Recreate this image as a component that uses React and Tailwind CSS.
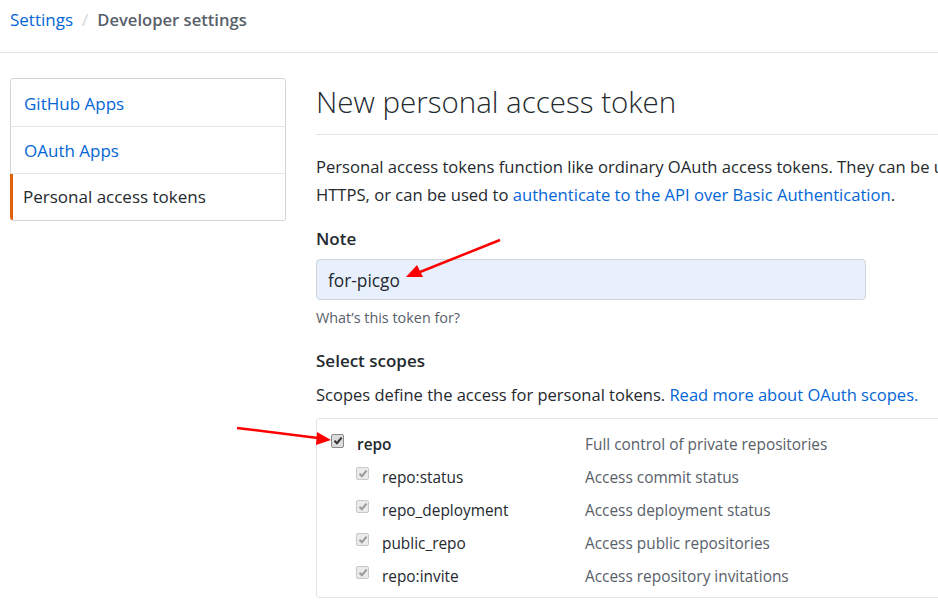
import React from "react";

function Check({ strong }) {
  return (
    <div
      className={
        strong
          ? "w-[13px] h-[14px] mb-[7px] rounded-[2px] border border-[#8a8a8a] bg-[#dcdcdc] flex items-center justify-center"
          : "w-[13px] h-[13px] mb-[7px] rounded-[2px] border border-[#c8c8c8] bg-[#ebebeb] flex items-center justify-center"
      }
    >
      <svg width="10" height="9" viewBox="0 0 10 9">
        <path
          d="M1.5 4.8 L3.9 7.2 L8.6 1.6"
          fill="none"
          stroke={strong ? "#333" : "#9a9a9a"}
          strokeWidth="2"
        />
      </svg>
    </div>
  );
}

const subs = [
  ["repo:status", "Access commit status"],
  ["repo_deployment", "Access deployment status"],
  ["public_repo", "Access public repositories"],
  ["repo:invite", "Access repository invitations"],
];

export default function App() {
  return (
    <div
      className="relative w-[938px] h-[600px] overflow-hidden bg-white text-[#24292e]"
      style={{ fontFamily: '"Open Sans", "Noto Sans", sans-serif' }}
    >
      <div className="h-[53px] border-b border-[#e1e4e8] px-[10px] pt-[6px] flex items-baseline text-[17px] leading-[28px]">
        <span className="text-[#0366d6]">Settings</span>
        <span className="mx-[9px] text-[#d1d5da]">/</span>
        <span className="font-semibold text-[#586069] text-[16.6px]">Developer settings</span>
      </div>

      <div className="flex pt-[25px] pl-[10px]">
        <div className="w-[276px] h-[143px] shrink-0 border border-[#d1d5da] rounded-[3px] flex flex-col text-[17px]">
          <div className="h-[48px] flex items-center pl-[13px] pt-[2px] border-b border-[#e1e4e8] text-[#0366d6]">
            GitHub Apps
          </div>
          <div className="h-[47px] flex items-center pl-[13px] pt-[2px] border-b border-[#e1e4e8] text-[#0366d6]">
            OAuth Apps
          </div>
          <div className="flex-1 flex items-center pl-[10px] border-l-[3px] border-[#e36209] -ml-px rounded-bl-[3px] text-[#24292e]">
            Personal access tokens
          </div>
        </div>

        <div className="ml-[30px] w-[900px] shrink-0">
          <div className="h-[57px] border-b border-[#e1e4e8]">
            <h1 className="text-[29.5px] font-light leading-[48px]">New personal access token</h1>
          </div>
          <p className="mt-[18px] text-[16.6px] leading-[28px] whitespace-nowrap">
            Personal access tokens function like ordinary OAuth access tokens. They can be used instead of a password for Git over
            <br />
            HTTPS, or can be used to{" "}
            <span className="text-[#0366d6]">authenticate to the API over Basic Authentication</span>.
          </p>

          <div className="mt-[16px] text-[17px] font-semibold leading-[28px]">Note</div>
          <div className="mt-[6px] w-[550px] h-[41px] rounded-[4px] border border-[#d1d5da] bg-[#e8f0fe] flex items-center pl-[11px] pt-[3px] text-[17.3px]">
            for-picgo
          </div>
          <div className="mt-[6px] text-[14.4px] leading-[24px] text-[#586069]">What’s this token for?</div>

          <div className="mt-[17px] text-[17px] font-semibold leading-[28px]">Select scopes</div>
          <p className="mt-[6px] text-[16.5px] leading-[28px]">
            Scopes define the access for personal tokens.{" "}
            <span className="text-[#0366d6]">Read more about OAuth scopes.</span>
          </p>

          <div className="mt-[9px] border border-[#e1e4e8] rounded-tl-[3px] rounded-bl-[3px] pt-[9px] pb-[4px] text-[15.4px]">
            <div className="h-[33px] flex items-center">
              <div className="w-[268px] flex items-center pl-[14px]">
                <Check strong />
                <span className="ml-[13px] font-semibold">repo</span>
              </div>
              <span className="text-[#586069]">Full control of private repositories</span>
            </div>
            {subs.map(([n, d]) => (
              <div key={n} className="h-[33px] flex items-center">
                <div className="w-[268px] flex items-center pl-[39px]">
                  <Check />
                  <span className="ml-[13px]">{n}</span>
                </div>
                <span className="text-[#586069]">{d}</span>
              </div>
            ))}
          </div>
        </div>
      </div>

      <svg className="absolute inset-0 pointer-events-none" width="938" height="600">
        <line x1="500" y1="240" x2="420" y2="272" stroke="#f00" strokeWidth="2.5" />
        <polygon points="406,277 417,265 423,277" fill="#f00" />
        <line x1="237" y1="428" x2="318" y2="438" stroke="#f00" strokeWidth="2.5" />
        <polygon points="331,440 317,432 316,445" fill="#f00" />
      </svg>
    </div>
  );
}
